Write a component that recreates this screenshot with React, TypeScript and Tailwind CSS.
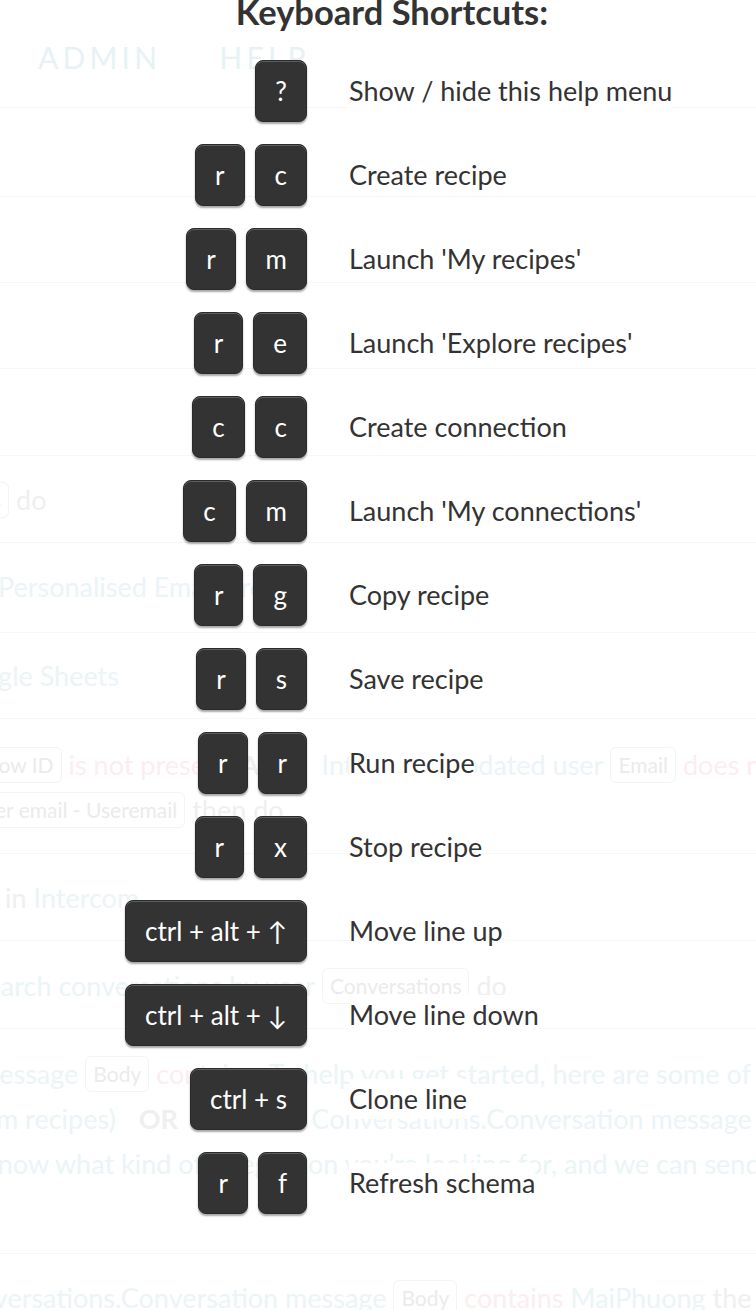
import React from "react";

const teal = "text-[#ebf4f6]";
const pink = "text-[#fcedf0]";
const grey = "text-[#efefef]";

function Pill({ children }: { children: React.ReactNode }) {
  return (
    <span className="inline-flex items-center h-[36px] px-[7px] rounded-[6px] border border-[#f4f4f4] text-[21px] text-[#ebebeb] bg-white">
      {children}
    </span>
  );
}

function Line({ children, className = "" }: { children: React.ReactNode; className?: string }) {
  return (
    <div className={"h-[44px] flex items-center gap-[7px] whitespace-nowrap text-[27px] " + className}>
      {children}
    </div>
  );
}

function Row({ h, pt, children }: { h: string; pt?: string; children?: React.ReactNode }) {
  return (
    <div className={"border-b border-[#f7f7f7] flex flex-col shrink-0 " + h + " " + (pt || "")}>
      {children}
    </div>
  );
}

function Background() {
  return (
    <div className="flex flex-col w-full">
      <div className="h-[108px] border-b border-[#f7f7f7] pt-[35px] shrink-0">
        <div className="h-[44px] flex items-center whitespace-nowrap text-[30px] tracking-[0.14em] text-[#e7f2f4]">
          <span className="ml-[38px]">ADMIN</span>
          <span className="ml-[58px]">HELP</span>
        </div>
      </div>
      <Row h="h-[89px]" />
      <Row h="h-[86px]" />
      <Row h="h-[86px]" />
      <Row h="h-[87px]" />
      <Row h="h-[87px]" pt="pt-[22px]">
        <Line className="-ml-[16px]">
          <Pill>s</Pill>
          <span className={grey}>do</span>
        </Line>
      </Row>
      <Row h="h-[90px]" pt="pt-[22px]">
        <Line className="-ml-[2px]">
          <span className={teal}>Personalised Email Promo</span>
        </Line>
      </Row>
      <Row h="h-[86px]" pt="pt-[21px]">
        <Line className="-ml-[52px]">
          <span className={teal}>Google Sheets</span>
        </Line>
      </Row>
      <Row h="h-[135px]" pt="pt-[24px]">
        <Line className="-ml-[22px]">
          <Pill>Row ID</Pill>
          <span className={pink}>is not present</span>
          <span className={grey + " font-bold ml-[4px]"}>AND</span>
          <span className={teal + " ml-[14px]"}>Intercom</span>
          <span className={teal + " ml-[14px]"}>updated user</span>
          <Pill>Email</Pill>
          <span className={pink}>does not</span>
        </Line>
        <Line className="-ml-[37px] mt-[1px]">
          <Pill>User email - Useremail</Pill>
          <span className={grey}>then do</span>
        </Line>
      </Row>
      <Row h="h-[87px]" pt="pt-[22px]">
        <Line className="ml-[5px]">
          <span className={grey}>in</span>
          <span className={teal}>Intercom</span>
        </Line>
      </Row>
      <Row h="h-[88px]" pt="pt-[23px]">
        <Line className="-ml-[28px]">
          <span className={teal}>Search conversations by user</span>
          <Pill>Conversations</Pill>
          <span className={grey}>do</span>
        </Line>
      </Row>
      <Row h="h-[225px]" pt="pt-[23px]">
        <Line className="-ml-[23px]">
          <span className={teal}>message</span>
          <Pill>Body</Pill>
          <span className={pink}>contains</span>
          <span className={teal + " ml-[6px]"}>To help you get started, here are some of</span>
        </Line>
        <Line className="-ml-[4px] mt-[1px]">
          <span className={teal}>m recipes)</span>
          <span className={grey + " font-bold ml-[16px]"}>OR</span>
          <span className={teal + " ml-[14px]"}>Intercom Conversations.Conversation message</span>
        </Line>
        <Line className="-ml-[16px] mt-[1px]">
          <span className={teal}>know what kind of integration you’re looking for, and we can send</span>
        </Line>
      </Row>
      <div className="pt-[22px] shrink-0">
        <Line className="-ml-[54px]">
          <span className={teal}>Conversations.Conversation message</span>
          <Pill>Body</Pill>
          <span className={pink}>contains</span>
          <span className={teal}>MaiPhuong</span>
          <span className={grey}>the</span>
        </Line>
      </div>
    </div>
  );
}

const shortcuts: { keys: string[]; label: string }[] = [
  { keys: ["?"], label: "Show / hide this help menu" },
  { keys: ["r", "c"], label: "Create recipe" },
  { keys: ["r", "m"], label: "Launch 'My recipes'" },
  { keys: ["r", "e"], label: "Launch 'Explore recipes'" },
  { keys: ["c", "c"], label: "Create connection" },
  { keys: ["c", "m"], label: "Launch 'My connections'" },
  { keys: ["r", "g"], label: "Copy recipe" },
  { keys: ["r", "s"], label: "Save recipe" },
  { keys: ["r", "r"], label: "Run recipe" },
  { keys: ["r", "x"], label: "Stop recipe" },
  { keys: ["ctrl + alt + ↑"], label: "Move line up" },
  { keys: ["ctrl + alt + ↓"], label: "Move line down" },
  { keys: ["ctrl + s"], label: "Clone line" },
  { keys: ["r", "f"], label: "Refresh schema" },
];

function Key({ label }: { label: string }) {
  return (
    <span className="h-[62px] px-[19px] flex items-center justify-center rounded-[8px] bg-[#333333] border border-[#2a2a2a] text-white text-[26px] shadow-[inset_0_1px_0_#5e5e5e,0_2px_2px_rgba(0,0,0,0.35)]">
      {label}
    </span>
  );
}

function Shortcuts() {
  return (
    <div className="absolute inset-0 flex flex-col">
      <div className="h-[60px] pl-[28px] text-center">
        <h1 className="text-[34.5px] leading-none font-bold text-[#333333] -mt-[5px]">Keyboard Shortcuts:</h1>
      </div>
      <div className="flex flex-col gap-[22px]">
        {shortcuts.map((s) => (
          <div key={s.label} className="flex items-center">
            <div className="w-[307px] flex justify-end gap-[10px] shrink-0">
              {s.keys.map((k, i) => (
                <Key key={i} label={k} />
              ))}
            </div>
            <span className="ml-[42px] text-[27px] text-[#333333] bg-white whitespace-nowrap">{s.label}</span>
          </div>
        ))}
      </div>
    </div>
  );
}

export default function App() {
  return (
    <div
      className="relative w-[756px] h-[1310px] overflow-hidden bg-white"
      style={{ fontFamily: "Lato, 'Noto Sans', sans-serif" }}
    >
      <Background />
      <Shortcuts />
    </div>
  );
}
